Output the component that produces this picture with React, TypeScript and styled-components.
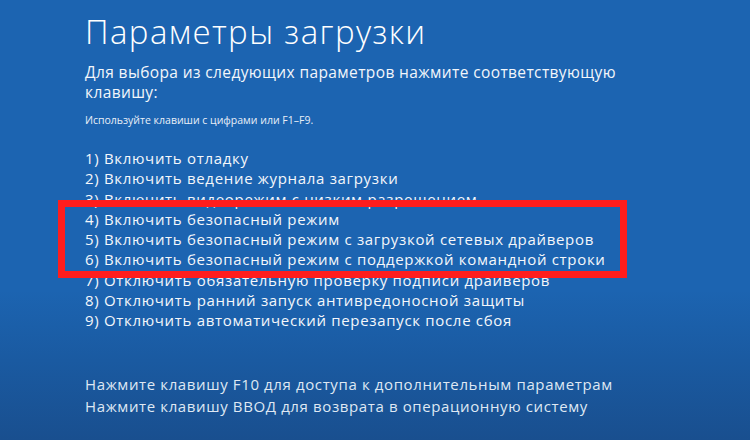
import styled, { createGlobalStyle } from 'styled-components';

const GlobalStyle = createGlobalStyle`
	html, body {
		margin: 0;
		padding: 0;
	}
	body {
		font-family: 'Open Sans', 'Noto Sans', sans-serif;
		background: #1b62ae;
	}
`;

const Screen = styled.div`
	position: relative;
	width: 750px;
	height: 440px;
	overflow: hidden;
	box-sizing: border-box;
	padding: 11px 0 0 85px;
	background: linear-gradient(
		to bottom,
		#1c64b1 0%,
		#1c64b1 66%,
		#1a5aa1 82%,
		#194f8f 100%
	);
	color: #ffffff;
	display: flex;
	flex-direction: column;
`;

const Title = styled.h1`
	margin: 0;
	font-size: 33px;
	line-height: 42px;
	font-weight: 300;
	letter-spacing: 1.4px;
`;

const Lead = styled.p`
	margin: 9px 0 0 0;
	font-size: 15.5px;
	line-height: 20px;
	letter-spacing: 0.38px;
	width: 545px;
	color: #f2f6fb;
`;

const Hint = styled.p`
	margin: 11px 0 0 0;
	font-size: 10.5px;
	line-height: 14px;
	color: #e8eef7;
`;

const OptionList = styled.ol`
	list-style: none;
	margin: 21px 0 0 0;
	padding: 0;
	display: flex;
	flex-direction: column;
`;

const Option = styled.li`
	font-size: 15px;
	line-height: 20.3px;
	letter-spacing: 0.68px;
	color: #f4f7fb;
	white-space: nowrap;
`;

const Footer = styled.div`
	margin-top: 43px;
	display: flex;
	flex-direction: column;
	gap: 1px;
`;

const FooterLine = styled.div`
	font-size: 15px;
	line-height: 21px;
	letter-spacing: 0.62px;
	color: #dfe8f3;
	white-space: nowrap;
`;

const Highlight = styled.div`
	position: absolute;
	left: 58px;
	top: 200px;
	width: 569px;
	height: 78px;
	box-sizing: border-box;
	border: 7px solid #ff1d1d;
	pointer-events: none;
`;

const options = [
	'1) Включить отладку',
	'2) Включить ведение журнала загрузки',
	'3) Включить видеорежим с низким разрешением',
	'4) Включить безопасный режим',
	'5) Включить безопасный режим с загрузкой сетевых драйверов',
	'6) Включить безопасный режим с поддержкой командной строки',
	'7) Отключить обязательную проверку подписи драйверов',
	'8) Отключить ранний запуск антивредоносной защиты',
	'9) Отключить автоматический перезапуск после сбоя',
];

export default function App() {
	return (
		<>
			<GlobalStyle />
			<Screen>
				<Title>Параметры загрузки</Title>
				<Lead>
					Для выбора из следующих параметров нажмите соответствующую клавишу:
				</Lead>
				<Hint>Используйте клавиши с цифрами или F1–F9.</Hint>
				<OptionList>
					{options.map((text) => (
						<Option key={text}>{text}</Option>
					))}
				</OptionList>
				<Footer>
					<FooterLine>
						Нажмите клавишу F10 для доступа к дополнительным параметрам
					</FooterLine>
					<FooterLine>
						Нажмите клавишу ВВОД для возврата в операционную систему
					</FooterLine>
				</Footer>
				<Highlight />
			</Screen>
		</>
	);
}
